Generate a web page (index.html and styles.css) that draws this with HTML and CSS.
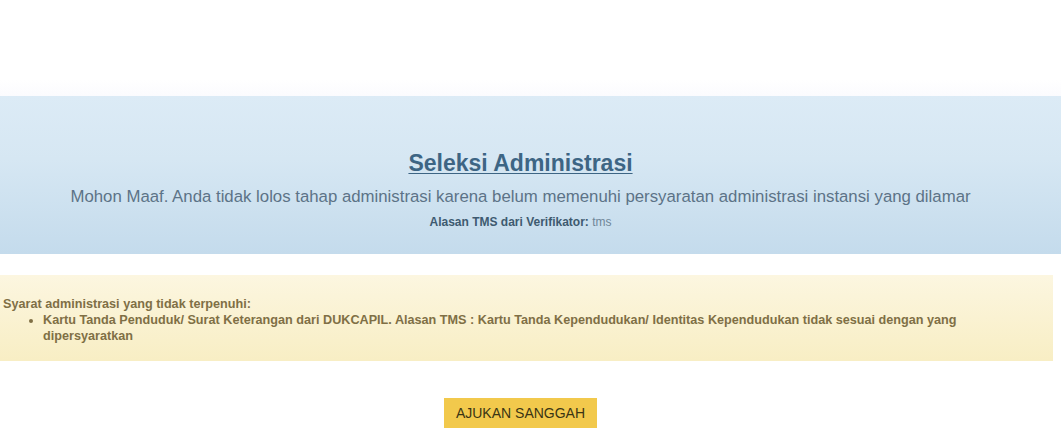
FILE: index.html
```html
<!DOCTYPE html>
<html lang="id">
<head>
<meta charset="utf-8">
<title>Seleksi Administrasi</title>
<link rel="stylesheet" href="styles.css">
</head>
<body>
<div class="page">
  <section class="alert-info">
    <h3 class="title">Seleksi Administrasi</h3>
    <p class="subtitle">Mohon Maaf. Anda tidak lolos tahap administrasi karena belum memenuhi persyaratan administrasi instansi yang dilamar</p>
    <p class="reason"><strong>Alasan TMS dari Verifikator:</strong> tms</p>
  </section>
  <section class="alert-warning">
    <p class="req-title">Syarat administrasi yang tidak terpenuhi:</p>
    <ul class="req-list">
      <li>Kartu Tanda Penduduk/ Surat Keterangan dari DUKCAPIL. Alasan TMS : Kartu Tanda Kependudukan/ Identitas Kependudukan tidak sesuai dengan yang dipersyaratkan</li>
    </ul>
  </section>
  <div class="actions">
    <button class="btn-sanggah" type="button">AJUKAN SANGGAH</button>
  </div>
</div>
</body>
</html>
```

FILE: styles.css
```css
html, body {
  margin: 0;
  padding: 0;
  background: #ffffff;
  font-family: "Liberation Sans", Arial, Helvetica, sans-serif;
}

.page {
  padding-top: 96px;
  height: 432px;
  box-sizing: border-box;
  overflow: hidden;
  background: linear-gradient(to bottom, #ffffff 0, #ffffff 80px, #fbfbfe 96px) no-repeat;
  background-size: 100% 96px;
}

.alert-info {
  height: 158px;
  box-sizing: border-box;
  padding: 55px 20px 0 0;
  text-align: center;
  background: linear-gradient(to bottom, #dcebf6 0%, #d6e7f3 40%, #c4dbec 100%);
}

.title {
  margin: 0;
  font-size: 23px;
  line-height: 24px;
  font-weight: bold;
  color: #3d6584;
  text-decoration: underline;
  text-decoration-thickness: 1px;
  text-underline-offset: 2px;
}

.subtitle {
  margin: 12px 0 0;
  font-size: 16.8px;
  line-height: 20px;
  color: #5c7387;
}

.reason {
  margin: 8px 0 0;
  font-size: 12px;
  line-height: 14px;
  color: #6f8698;
}

.reason strong {
  color: #3e5a70;
}

.alert-warning {
  margin: 21px 8px 0 0;
  height: 86px;
  box-sizing: border-box;
  padding: 21px 15px 0 3px;
  background: linear-gradient(to bottom, #fcf6e0 0%, #faf2d2 50%, #f8eec4 100%);
  color: #7f6f45;
  font-size: 12.65px;
  line-height: 16px;
  font-weight: bold;
}

.req-title {
  margin: 0;
}

.req-list {
  margin: 0;
  padding-left: 40px;
  list-style: disc outside;
}

.actions {
  display: flex;
  justify-content: center;
  padding-top: 37px;
  padding-right: 20px;
}

.btn-sanggah {
  height: 30px;
  padding: 0 12px;
  border: none;
  background: #f2c94c;
  color: #3b3514;
  font-family: "Liberation Sans", Arial, Helvetica, sans-serif;
  font-size: 14px;
  line-height: 30px;
}
```
